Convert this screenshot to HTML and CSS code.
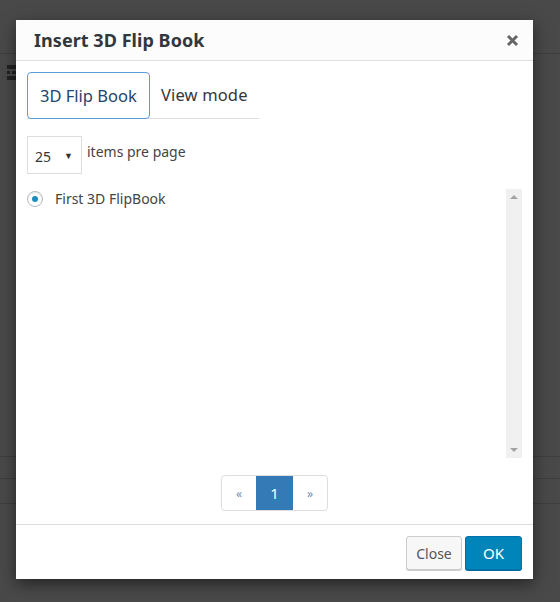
FILE: index.html
```html
<!DOCTYPE html>
<html>
<head>
<meta charset="utf-8">
<link rel="stylesheet" href="styles.css">
</head>
<body>
<div class="page">
  <div class="page-top"></div>
  <div class="page-tool">
    <svg class="page-icon" width="10" height="16" viewBox="0 0 10 16"><rect x="0" y="0" width="10" height="4" fill="#222"/><rect x="0" y="6" width="3" height="3" fill="#222"/><rect x="5" y="6" width="5" height="3" fill="#222"/><rect x="0" y="11" width="10" height="4" fill="#222"/></svg>
  </div>
  <div class="page-row r1"></div>
  <div class="page-row r2"></div>
  <div class="page-row r3"></div>
</div>

<div class="dialog">
  <div class="dlg-head">
    <h1 class="dlg-title">Insert 3D Flip Book</h1>
    <span class="dlg-close">
      <svg width="13" height="13" viewBox="0 0 13 13"><path d="M2 2 L11 11 M11 2 L2 11" stroke="#666" stroke-width="3" stroke-linecap="butt"/></svg>
    </span>
  </div>
  <div class="dlg-body">
    <div class="tabs">
      <div class="tab active">3D Flip Book</div>
      <div class="tab">View mode</div>
    </div>
    <div class="perpage">
      <div class="select"><span>25</span><span class="caret">▼</span></div>
      <span class="perpage-label">items pre page</span>
    </div>
    <div class="list">
      <div class="list-items">
        <label class="item"><span class="radio"><span class="dot"></span></span>First 3D FlipBook</label>
      </div>
      <div class="scrollbar">
        <span class="arr up"></span>
        <span class="arr down"></span>
      </div>
    </div>
    <div class="pager">
      <span class="pg">«</span>
      <span class="pg cur">1</span>
      <span class="pg">»</span>
    </div>
  </div>
  <div class="dlg-foot">
    <button class="btn btn-close">Close</button>
    <button class="btn btn-ok">OK</button>
  </div>
</div>
</body>
</html>
```

FILE: styles.css
```css
html, body {
  margin: 0;
  padding: 0;
}
body {
  width: 560px;
  height: 602px;
  overflow: hidden;
  background: #494949;
  font-family: "Noto Sans", "Open Sans", sans-serif;
  position: relative;
}
.page {
  display: flex;
  flex-direction: column;
}
.page-top {
  height: 53px;
  border-bottom: 1px solid #3e3e3e;
}
.page-tool {
  height: 402px;
  padding: 11px 0 0 7px;
  box-sizing: border-box;
}
.page-icon { display: block; }
.page-row {
  border-bottom: 1px solid #3e3e3e;
}
.r1 { height: 0; }
.r2 { height: 21px; }
.r3 { height: 24px; }

.dialog {
  position: absolute;
  left: 16px;
  top: 20px;
  width: 517px;
  height: 559px;
  background: #fff;
  box-shadow: 0 5px 15px rgba(0,0,0,0.5);
  display: flex;
  flex-direction: column;
}
.dlg-head {
  height: 40px;
  background: #fcfcfc;
  border-bottom: 1px solid #dddddd;
  display: flex;
  align-items: center;
  justify-content: space-between;
  padding: 0 14px 0 18px;
}
.dlg-title {
  margin: 0;
  font-size: 18px;
  font-weight: 700;
  color: #32373c;
  letter-spacing: 0.05px;
}
.dlg-close {
  display: flex;
  margin-top: 1px;
}
.dlg-body {
  flex: 1;
  padding: 11px 11px 0 11px;
  display: flex;
  flex-direction: column;
}
.tabs {
  display: flex;
  width: 232px;
  border-bottom: 1px solid #dcdcdc;
  height: 46px;
}
.tab {
  font-size: 16.5px;
  color: #32373c;
  padding: 0 11px;
  height: 47px;
  line-height: 45px;
  box-sizing: border-box;
  letter-spacing: 0.15px;
}
.tab.active {
  border: 1px solid #5b9dd9;
  border-radius: 4px;
  color: #23456a;
  padding: 0 12px;
  width: 123px;
  background: #fff;
  letter-spacing: 0;
}
.perpage {
  display: flex;
  align-items: center;
  margin-top: 17px;
  gap: 5px;
}
.select {
  width: 55px;
  height: 38px;
  box-sizing: border-box;
  border: 1px solid #dddddd;
  display: flex;
  align-items: center;
  justify-content: space-between;
  padding: 2px 8px 0 7px;
  font-size: 14px;
  color: #32373c;
}
.caret {
  font-size: 9px;
  color: #333;
  margin-top: -2px;
}
.perpage-label {
  font-size: 14px;
  color: #444;
  margin-top: -7px;
}
.list {
  margin-top: 15px;
  height: 269px;
  display: flex;
}
.list-items {
  flex: 1;
}
.item {
  display: flex;
  align-items: center;
  font-size: 14px;
  color: #444;
  gap: 12px;
  margin-top: 0;
}
.radio {
  width: 16px;
  height: 16px;
  box-sizing: border-box;
  border: 1px solid #b4b9be;
  border-radius: 50%;
  display: flex;
  align-items: center;
  justify-content: center;
  box-shadow: inset 0 1px 2px rgba(0,0,0,0.1);
}
.dot {
  width: 6px;
  height: 6px;
  border-radius: 50%;
  background: #1e8cbe;
}
.scrollbar {
  width: 16px;
  background: #f0f0f0;
  display: flex;
  flex-direction: column;
  justify-content: space-between;
  align-items: center;
  padding: 6px 0;
  box-sizing: border-box;
}
.arr {
  width: 0;
  height: 0;
  border-left: 4px solid transparent;
  border-right: 4px solid transparent;
}
.arr.up { border-bottom: 4px solid #a3a3a3; }
.arr.down { border-top: 4px solid #a3a3a3; }
.pager {
  align-self: center;
  margin-top: 17px;
  display: flex;
  border: 1px solid #dddddd;
  border-radius: 4px;
  height: 36px;
  box-sizing: border-box;
  overflow: hidden;
}
.pg {
  width: 34px;
  display: flex;
  align-items: center;
  justify-content: center;
  font-size: 12px;
  color: #6f8fb0;
}
.pg.cur {
  width: 37px;
  background: #337ab7;
  color: #fff;
  font-size: 15px;
}
.dlg-foot {
  height: 55px;
  border-top: 1px solid #dddddd;
  display: flex;
  justify-content: flex-end;
  align-items: flex-start;
  padding: 11px 11px 0 0;
  box-sizing: border-box;
  gap: 3px;
}
.btn {
  font-family: "Noto Sans", "Open Sans", sans-serif;
  font-size: 14px;
  height: 34px;
  border-radius: 3px;
  padding: 0;
  box-sizing: border-box;
}
.btn-close {
  width: 56px;
  background: #f7f7f7;
  border: 1px solid #cccccc;
  box-shadow: 0 1px 0 #cccccc;
  color: #555;
}
.btn-ok {
  width: 57px;
  background: #0085ba;
  border: 1px solid #0073aa;
  box-shadow: 0 1px 0 #006799;
  color: #fff;
  font-size: 15px;
}
```
